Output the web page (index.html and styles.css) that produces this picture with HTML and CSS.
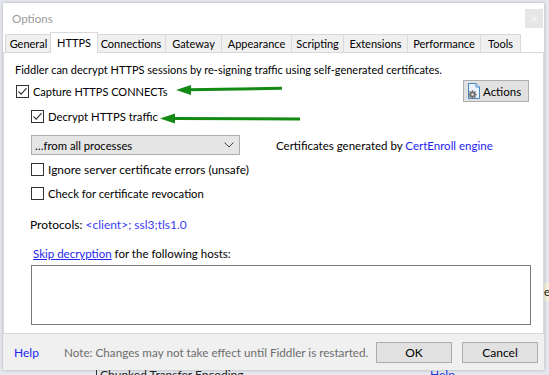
FILE: index.html
```html
<!DOCTYPE html>
<html>
<head>
<meta charset="utf-8">
<link rel="stylesheet" href="styles.css">
</head>
<body>
<div class="desktop">
  <div class="bg-tree">Chunked Transfer Encoding</div>
  <div class="bg-help">Help</div>
  <div class="bg-right-e">e</div>
  <div class="dialog">
    <div class="titlebar">
      <span class="title">Options</span>
      <span class="close">×</span>
    </div>
    <div class="tabs">
      <span class="tab t-general">General</span>
      <span class="tab t-https active">HTTPS</span>
      <span class="tab t-conn">Connections</span>
      <span class="tab t-gate">Gateway</span>
      <span class="tab t-appear">Appearance</span>
      <span class="tab t-script">Scripting</span>
      <span class="tab t-ext">Extensions</span>
      <span class="tab t-perf">Performance</span>
      <span class="tab t-tools">Tools</span>
    </div>
    <div class="panel">
      <div class="line intro">Fiddler can decrypt HTTPS sessions by re-signing traffic using self-generated certificates.</div>
      <div class="row capture">
        <label class="check"><span class="box checked"><svg viewBox="0 0 13 13" width="13" height="13"><path d="M2.5 6.5 L5.2 9.2 L10.5 3.2" fill="none" stroke="#333" stroke-width="1.1"/></svg></span><span class="lbl-capture">Capture HTTPS CONNECTs</span></label>
        <button class="btn actions"><svg class="act-icon" viewBox="0 0 16 16" width="16" height="16">
          <path d="M2.5 0.5 H10 L13.5 4 V15.5 H2.5 Z" fill="#eaf3fb" stroke="#4a86c5"/>
          <path d="M10 0.5 V4 H13.5" fill="#cfe2f5" stroke="#4a86c5"/>
          <circle cx="6.5" cy="11.5" r="3.2" fill="#8a8a8a"/>
          <g stroke="#6d6d6d" stroke-width="1.3"><path d="M6.5 7.3 V15.7 M2.3 11.5 H10.7 M3.5 8.5 L9.5 14.5 M9.5 8.5 L3.5 14.5"/></g>
          <circle cx="6.5" cy="11.5" r="1.2" fill="#e8e8e8"/>
        </svg><span>Actions</span></button>
      </div>
      <div class="row decrypt">
        <label class="check"><span class="box checked"><svg viewBox="0 0 13 13" width="13" height="13"><path d="M2.5 6.5 L5.2 9.2 L10.5 3.2" fill="none" stroke="#333" stroke-width="1.1"/></svg></span><span class="lbl-decrypt">Decrypt HTTPS traffic</span></label>
      </div>
      <div class="row procs">
        <div class="select"><span>…from all processes</span><svg viewBox="0 0 10 6" width="10" height="6"><path d="M0.5 0.5 L5 5 L9.5 0.5" fill="none" stroke="#444"/></svg></div>
        <div class="certs">Certificates generated by <span class="link">CertEnroll engine</span></div>
      </div>
      <div class="row ignore">
        <label class="check"><span class="box"></span><span class="lbl-ignore">Ignore server certificate errors (unsafe)</span></label>
      </div>
      <div class="row revoke">
        <label class="check"><span class="box"></span><span class="lbl-revoke">Check for certificate revocation</span></label>
      </div>
      <div class="line protocols">Protocols: <span class="link proto">&lt;client&gt;; ssl3;tls1.0</span></div>
      <div class="line skip"><span class="link ul">Skip decryption</span> for the following hosts:</div>
      <div class="hosts"></div>
      <svg class="arrows" width="549" height="375" viewBox="0 0 549 375">
        <g fill="#138a13" stroke="#138a13">
          <path d="M188 89.8 L282 88.2" stroke-width="3" fill="none"/>
          <path d="M176 90 L191 85 L191 95 Z" stroke="none"/>
          <path d="M172 118.5 L300 119" stroke-width="3" fill="none"/>
          <path d="M160 118.5 L175 113.5 L175 123.5 Z" stroke="none"/>
        </g>
      </svg>
    </div>
    <div class="footer">
      <span class="link help">Help</span>
      <span class="note">Note: Changes may not take effect until Fiddler is restarted.</span>
      <button class="btn ok">OK</button>
      <button class="btn cancel">Cancel</button>
    </div>
  </div>
</div>
</body>
</html>
```
FILE: styles.css
```css
* { box-sizing: border-box; }
html, body { margin: 0; padding: 0; }
body {
  width: 549px; height: 375px; overflow: hidden;
  background: #e4e8ee;
  font-family: Lato, "Noto Sans", sans-serif;
  font-size: 11.5px;
  color: #000;
}
.desktop { position: relative; width: 549px; height: 375px; padding: 3px 0 0 3px; }
.bg-tree {
  position: absolute; left: 96px; top: 368px; font-size: 12px; color: #222;
  border-left: 1px solid #333; padding-left: 3px; line-height: 14px; white-space: nowrap;
}
.bg-help { position: absolute; left: 430px; top: 368px; font-size: 12px; color: #2233dd; line-height: 14px; }
.bg-right-e {
  position: absolute; left: 540px; top: 283px; width: 12px; height: 18px;
  background: #f4f1dc; color: #222; line-height: 18px; padding-left: 4px;
}
.dialog {
  position: relative; z-index: 1;
  width: 541px; height: 367px; background: #fff;
  box-shadow: 0 0 3px rgba(0,0,0,0.25);
  display: flex; flex-direction: column;
}
.titlebar { height: 30px; display: flex; align-items: center; justify-content: space-between; padding: 0 1px 0 9px; }
.title { color: #9a9a9a; font-size: 11.6px; }
.close {
  width: 18px; height: 19px; background: #e6e6e6; color: #fbfbfb;
  display: flex; align-items: center; justify-content: center; font-size: 12px; margin-top: 1px;
}
.tabs { display: flex; align-items: flex-end; height: 19px; padding-left: 2px; position: relative; z-index: 2; font-size: 11px; }
.tab {
  height: 18px; line-height: 17px; background: #f0f0f0; text-align: center;
  border: 1px solid #d9d9d9; border-bottom: none; margin-left: -1px;
  color: #000; white-space: nowrap;
}
.tab:first-child { margin-left: 0; }
.t-general { width: 47px; }
.t-https { width: 48px; }
.t-conn { width: 70px; }
.t-gate { width: 57px; }
.t-appear { width: 71px; }
.t-script { width: 53px; }
.t-ext { width: 65px; }
.t-perf { width: 74px; }
.t-tools { width: 41px; }
.tab.active {
  height: 21px; background: #fff; margin-bottom: -1px; line-height: 19px;
  margin-left: -2px; margin-right: -1px; position: relative; z-index: 3;
}
.panel {
  position: relative; height: 282px; border: 1px solid #d9d9d9;
  background: #fff; padding: 0 0 0 11px;
}
.row { display: flex; align-items: center; white-space: nowrap; }
.line { white-space: nowrap; line-height: 16px; height: 16px; }
.intro { margin-top: 9px; font-size: 11px; }
.capture { margin-top: 2px; height: 22px; padding-left: 1px; justify-content: space-between; padding-right: 14px; }
.check { display: flex; align-items: center; gap: 4px; }
.box {
  width: 13px; height: 13px; border: 1px solid #333; background: #fff;
  display: inline-flex; position: relative; flex: none;
}
.box svg { position: absolute; left: -1px; top: -1px; }
.lbl-capture { font-size: 11px; }
.lbl-decrypt { font-size: 11.3px; }
.lbl-ignore { font-size: 11.9px; }
.lbl-revoke { font-size: 11.3px; }
.decrypt { margin-top: 5px; height: 18px; padding-left: 16px; }
.procs { margin-top: 10px; height: 20px; padding-left: 16px; }
.select {
  width: 209px; height: 20px; background: #e5e5e5; border: 1px solid #adadad;
  display: flex; align-items: center; justify-content: space-between; padding: 0 5px 0 3px;
  font-size: 11.3px;
}
.certs { margin-left: 36px; font-size: 11.5px; }
.link { color: #2424f0; }
.proto { color: #3b3bf5; }
.ul { text-decoration: underline; }
.ignore { margin-top: 5px; height: 18px; padding-left: 16px; }
.revoke { margin-top: 6px; height: 18px; padding-left: 16px; }
.protocols { margin-top: 15px; padding-left: 15px; font-size: 12px; }
.skip { margin-top: 13px; padding-left: 18px; font-size: 11.5px; }
.hosts { margin: 3px 0 0 16px; width: 500px; height: 60px; border: 1px solid #7a7a7a; background: #fff; }
.arrows { position: absolute; left: -4px; top: -53px; pointer-events: none; }
.footer {
  flex: 1; background: #f0f0f0; display: flex; align-items: center; padding: 0 6px 0 11px;
  white-space: nowrap;
}
.help { width: 50px; font-size: 12px; }
.note { color: #6d6d6d; flex: 1; font-size: 11.7px; }
.btn {
  font-family: inherit; font-size: 12px; color: #000;
  background: #e1e1e1; border: 1px solid #adadad; height: 21px; padding: 0;
}
.ok, .cancel { width: 76px; }
.cancel { margin-left: 10px; }
.actions { width: 66px; height: 22px; display: flex; align-items: center; padding: 0 2px; gap: 1px; font-size: 11.5px; }
.act-icon { flex: none; }
```
